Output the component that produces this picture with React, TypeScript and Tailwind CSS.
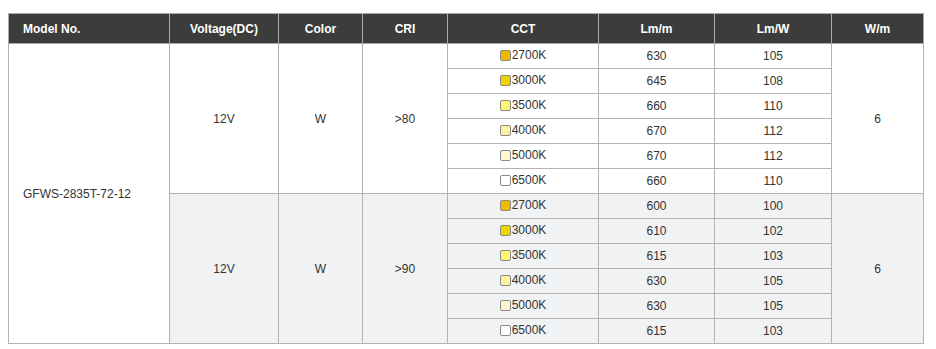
import React from "react";

const GROUPS = [
  {
    cri: ">80",
    bg: "bg-white",
    rows: [
      { cct: "2700K", lmm: 630, lmw: 105 },
      { cct: "3000K", lmm: 645, lmw: 108 },
      { cct: "3500K", lmm: 660, lmw: 110 },
      { cct: "4000K", lmm: 670, lmw: 112 },
      { cct: "5000K", lmm: 670, lmw: 112 },
      { cct: "6500K", lmm: 660, lmw: 110 },
    ],
  },
  {
    cri: ">90",
    bg: "bg-[#f1f2f4]",
    rows: [
      { cct: "2700K", lmm: 600, lmw: 100 },
      { cct: "3000K", lmm: 610, lmw: 102 },
      { cct: "3500K", lmm: 615, lmw: 103 },
      { cct: "4000K", lmm: 630, lmw: 105 },
      { cct: "5000K", lmm: 630, lmw: 105 },
      { cct: "6500K", lmm: 615, lmw: 103 },
    ],
  },
];

const SWATCH: Record<string, string> = {
  "2700K": "bg-[#f0b700]",
  "3000K": "bg-[#f0d400]",
  "3500K": "bg-[#fff574]",
  "4000K": "bg-[#fff3a2]",
  "5000K": "bg-[#fff6d2]",
  "6500K": "bg-white",
};

const th = "border border-[#a9a9a9] font-bold text-white text-[12px] text-center";
const td = "border border-[#b3b3b3] text-[12px] text-[#333] text-center";

export default function App() {
  return (
    <div className="bg-white w-[936px] h-[349px] pt-[13px] pl-[8px] font-['Liberation_Sans',Arial,sans-serif]">
      <table className="border-collapse table-fixed w-[915px] border border-[#a9a9a9]">
        <colgroup>
          <col className="w-[161px]" />
          <col className="w-[109px]" />
          <col className="w-[84px]" />
          <col className="w-[85px]" />
          <col className="w-[151px]" />
          <col className="w-[116px]" />
          <col className="w-[117px]" />
          <col className="w-[92px]" />
        </colgroup>
        <thead>
          <tr className="h-[30px] bg-[#3c3c3c]">
            <th className={`${th} !text-left pl-[14px]`}>Model No.</th>
            <th className={th}>Voltage(DC)</th>
            <th className={th}>Color</th>
            <th className={th}>CRI</th>
            <th className={th}>CCT</th>
            <th className={th}>Lm/m</th>
            <th className={th}>Lm/W</th>
            <th className={th}>W/m</th>
          </tr>
        </thead>
        <tbody>
          {GROUPS.map((g, gi) =>
            g.rows.map((r, ri) => (
              <tr key={`${gi}-${ri}`} className={`h-[25px] ${g.bg}`}>
                {gi === 0 && ri === 0 && (
                  <td rowSpan={12} className={`${td} bg-white !text-left pl-[14px]`}>
                    GFWS-2835T-72-12
                  </td>
                )}
                {ri === 0 && (
                  <>
                    <td rowSpan={6} className={td}>12V</td>
                    <td rowSpan={6} className={td}>W</td>
                    <td rowSpan={6} className={td}>{g.cri}</td>
                  </>
                )}
                <td className={td}>
                  <span className="inline-flex items-center">
                    <span
                      className={`inline-block shrink-0 w-[11px] h-[11px] rounded-[2px] border border-[#8a8a8a] mr-[1px] ${SWATCH[r.cct]}`}
                    />
                    {r.cct}
                  </span>
                </td>
                <td className={td}>{r.lmm}</td>
                <td className={td}>{r.lmw}</td>
                {ri === 0 && (
                  <td rowSpan={6} className={td}>6</td>
                )}
              </tr>
            ))
          )}
        </tbody>
      </table>
    </div>
  );
}
